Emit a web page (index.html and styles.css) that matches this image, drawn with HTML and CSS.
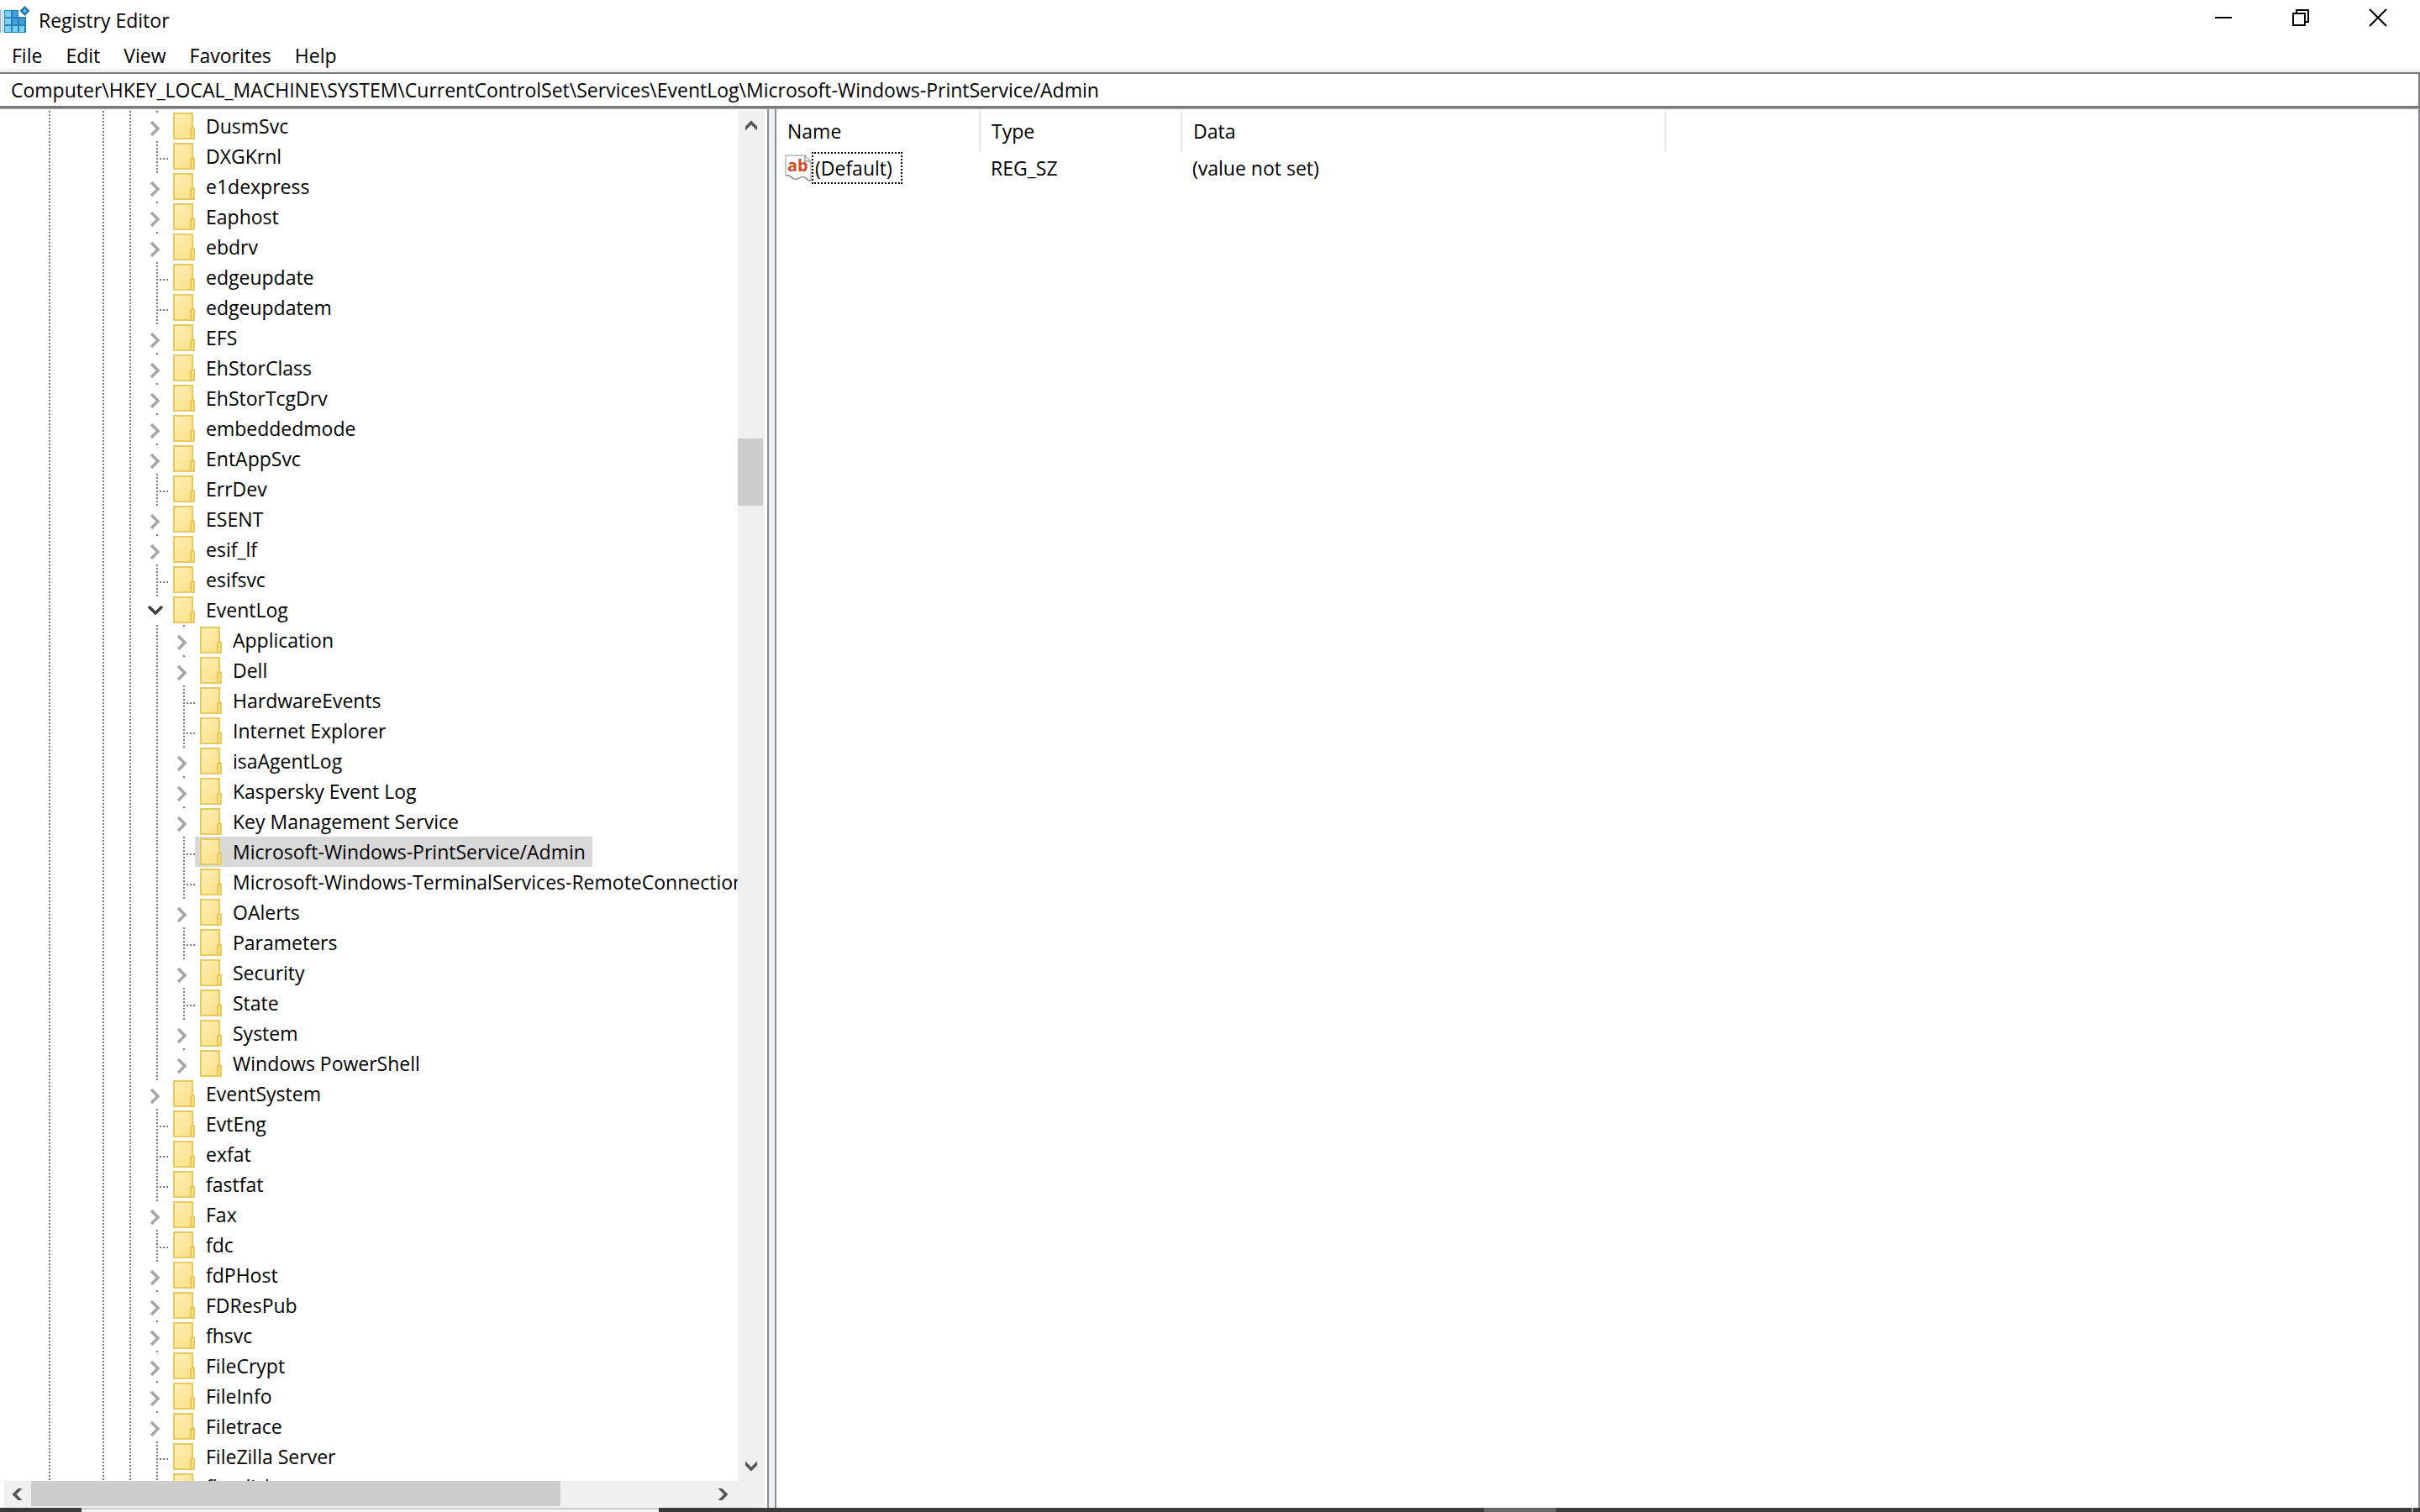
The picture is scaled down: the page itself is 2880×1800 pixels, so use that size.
FILE: index.html
```html
<!DOCTYPE html>
<html lang="en">
<head>
<meta charset="utf-8">
<title>Registry Editor</title>
<link rel="stylesheet" href="styles.css">
</head>
<body>
<svg class="defs" aria-hidden="true">
  <defs>
    <linearGradient id="paper" x1="0" y1="0" x2="1" y2="1">
      <stop offset="0" stop-color="#fdeeb4"/><stop offset="1" stop-color="#f9df85"/>
    </linearGradient>
    <symbol id="folder" viewBox="0 0 26 32">
      <path d="M1 1h22v17.500h2v12.500h-24z" fill="url(#paper)" stroke="#e8c95c" stroke-width="2"/>
      <path d="M21 30v-10q0-1.500 2-1.500" fill="none" stroke="#e0be4c" stroke-width="1.500"/>
    </symbol>
    <symbol id="right" viewBox="0 0 14 20"><path d="M2 2l8 8-8 8" fill="none" stroke="#a6a6a6" stroke-width="3.500"/></symbol>
    <symbol id="down" viewBox="0 0 20 14"><path d="M2 2l8 8 8-8" fill="none" stroke="#404040" stroke-width="3.500"/></symbol>
    <symbol id="arrow" viewBox="0 0 16 16"><path d="M1 8.500L8 1.500l7 7v5l-7-7-7 7z" fill="#555"/></symbol>
  </defs>
</svg>
<div class="window">
  <header class="titlebar">
    <svg class="app-icon" viewBox="0 0 36 34" aria-hidden="true">
      <path d="M.5 5v27M3 5v27" stroke="#7fb9df" stroke-width="1"/>
      <path d="M5 5h17v8h9v19H5z" fill="#2b7fb8"/>
      <path d="M6 6h7v7H6zM6 15h7v7H6zM6 24h7v7H6zM15 24h6v7h-6zM23 24h6v7h-6z" fill="#74d0fa"/>
      <path d="M15 6h6v7h-6zM15 15h6v7h-6zM23 15h6v7h-6z" fill="#3f9fd6"/>
      <path d="M29.500 0L35.500 6l-6 6-6-6z" fill="#2377ad"/>
      <path d="M29.500 3.500L32 6l-2.500 2.500L27 6z" fill="#5fc0f0"/>
    </svg>
    <h1 class="title">Registry Editor</h1>
    <div class="controls">
      <button class="control" aria-label="Minimize"><svg width="22" height="22" viewBox="0 0 22 22"><path d="M1 11h20" stroke="#000" stroke-width="2"/></svg></button>
      <button class="control" aria-label="Restore"><svg width="22" height="22" viewBox="0 0 22 22"><path d="M2 6h14v14H2zM6 6V2h14v14h-4" fill="none" stroke="#000" stroke-width="2"/></svg></button>
      <button class="control" aria-label="Close"><svg width="22" height="22" viewBox="0 0 22 22"><path d="M1 1l20 20M21 1L1 21" stroke="#000" stroke-width="2"/></svg></button>
    </div>
  </header>
  <nav class="menubar" aria-label="Menu">
    <button class="menu">File</button>
    <button class="menu">Edit</button>
    <button class="menu">View</button>
    <button class="menu">Favorites</button>
    <button class="menu">Help</button>
  </nav>
  <input class="address" type="text" aria-label="Address" value="Computer\HKEY_LOCAL_MACHINE\SYSTEM\CurrentControlSet\Services\EventLog\Microsoft-Windows-PrintService/Admin">
  <main class="panes">
    <section class="tree-pane" aria-label="Keys">
      <div class="tree-row">
        <ul class="tree">
          <li class="node"><button class="toggle" aria-label="Expand"><svg><use href="#right"/></svg></button><svg class="folder"><use href="#folder"/></svg><span class="key">DusmSvc</span></li>
          <li class="node leaf"><svg class="folder"><use href="#folder"/></svg><span class="key">DXGKrnl</span></li>
          <li class="node"><button class="toggle" aria-label="Expand"><svg><use href="#right"/></svg></button><svg class="folder"><use href="#folder"/></svg><span class="key">e1dexpress</span></li>
          <li class="node"><button class="toggle" aria-label="Expand"><svg><use href="#right"/></svg></button><svg class="folder"><use href="#folder"/></svg><span class="key">Eaphost</span></li>
          <li class="node"><button class="toggle" aria-label="Expand"><svg><use href="#right"/></svg></button><svg class="folder"><use href="#folder"/></svg><span class="key">ebdrv</span></li>
          <li class="node leaf"><svg class="folder"><use href="#folder"/></svg><span class="key">edgeupdate</span></li>
          <li class="node leaf"><svg class="folder"><use href="#folder"/></svg><span class="key">edgeupdatem</span></li>
          <li class="node"><button class="toggle" aria-label="Expand"><svg><use href="#right"/></svg></button><svg class="folder"><use href="#folder"/></svg><span class="key">EFS</span></li>
          <li class="node"><button class="toggle" aria-label="Expand"><svg><use href="#right"/></svg></button><svg class="folder"><use href="#folder"/></svg><span class="key">EhStorClass</span></li>
          <li class="node"><button class="toggle" aria-label="Expand"><svg><use href="#right"/></svg></button><svg class="folder"><use href="#folder"/></svg><span class="key">EhStorTcgDrv</span></li>
          <li class="node"><button class="toggle" aria-label="Expand"><svg><use href="#right"/></svg></button><svg class="folder"><use href="#folder"/></svg><span class="key">embeddedmode</span></li>
          <li class="node"><button class="toggle" aria-label="Expand"><svg><use href="#right"/></svg></button><svg class="folder"><use href="#folder"/></svg><span class="key">EntAppSvc</span></li>
          <li class="node leaf"><svg class="folder"><use href="#folder"/></svg><span class="key">ErrDev</span></li>
          <li class="node"><button class="toggle" aria-label="Expand"><svg><use href="#right"/></svg></button><svg class="folder"><use href="#folder"/></svg><span class="key">ESENT</span></li>
          <li class="node"><button class="toggle" aria-label="Expand"><svg><use href="#right"/></svg></button><svg class="folder"><use href="#folder"/></svg><span class="key">esif_lf</span></li>
          <li class="node leaf"><svg class="folder"><use href="#folder"/></svg><span class="key">esifsvc</span></li>
          <li class="node open"><button class="toggle" aria-label="Collapse"><svg><use href="#down"/></svg></button><svg class="folder"><use href="#folder"/></svg><span class="key">EventLog</span></li>
          <li class="branch">
            <ul class="children">
              <li class="node"><button class="toggle" aria-label="Expand"><svg><use href="#right"/></svg></button><svg class="folder"><use href="#folder"/></svg><span class="key">Application</span></li>
              <li class="node"><button class="toggle" aria-label="Expand"><svg><use href="#right"/></svg></button><svg class="folder"><use href="#folder"/></svg><span class="key">Dell</span></li>
              <li class="node leaf"><svg class="folder"><use href="#folder"/></svg><span class="key">HardwareEvents</span></li>
              <li class="node leaf"><svg class="folder"><use href="#folder"/></svg><span class="key">Internet Explorer</span></li>
              <li class="node"><button class="toggle" aria-label="Expand"><svg><use href="#right"/></svg></button><svg class="folder"><use href="#folder"/></svg><span class="key">isaAgentLog</span></li>
              <li class="node"><button class="toggle" aria-label="Expand"><svg><use href="#right"/></svg></button><svg class="folder"><use href="#folder"/></svg><span class="key">Kaspersky Event Log</span></li>
              <li class="node"><button class="toggle" aria-label="Expand"><svg><use href="#right"/></svg></button><svg class="folder"><use href="#folder"/></svg><span class="key">Key Management Service</span></li>
              <li class="node leaf"><span class="selected"><svg class="folder"><use href="#folder"/></svg><span class="key">Microsoft-Windows-PrintService/Admin</span></span></li>
              <li class="node leaf"><svg class="folder"><use href="#folder"/></svg><span class="key">Microsoft-Windows-TerminalServices-RemoteConnectionManager</span></li>
              <li class="node"><button class="toggle" aria-label="Expand"><svg><use href="#right"/></svg></button><svg class="folder"><use href="#folder"/></svg><span class="key">OAlerts</span></li>
              <li class="node leaf"><svg class="folder"><use href="#folder"/></svg><span class="key">Parameters</span></li>
              <li class="node"><button class="toggle" aria-label="Expand"><svg><use href="#right"/></svg></button><svg class="folder"><use href="#folder"/></svg><span class="key">Security</span></li>
              <li class="node leaf"><svg class="folder"><use href="#folder"/></svg><span class="key">State</span></li>
              <li class="node"><button class="toggle" aria-label="Expand"><svg><use href="#right"/></svg></button><svg class="folder"><use href="#folder"/></svg><span class="key">System</span></li>
              <li class="node"><button class="toggle" aria-label="Expand"><svg><use href="#right"/></svg></button><svg class="folder"><use href="#folder"/></svg><span class="key">Windows PowerShell</span></li>
            </ul>
          </li>
          <li class="node"><button class="toggle" aria-label="Expand"><svg><use href="#right"/></svg></button><svg class="folder"><use href="#folder"/></svg><span class="key">EventSystem</span></li>
          <li class="node leaf"><svg class="folder"><use href="#folder"/></svg><span class="key">EvtEng</span></li>
          <li class="node leaf"><svg class="folder"><use href="#folder"/></svg><span class="key">exfat</span></li>
          <li class="node leaf"><svg class="folder"><use href="#folder"/></svg><span class="key">fastfat</span></li>
          <li class="node"><button class="toggle" aria-label="Expand"><svg><use href="#right"/></svg></button><svg class="folder"><use href="#folder"/></svg><span class="key">Fax</span></li>
          <li class="node leaf"><svg class="folder"><use href="#folder"/></svg><span class="key">fdc</span></li>
          <li class="node"><button class="toggle" aria-label="Expand"><svg><use href="#right"/></svg></button><svg class="folder"><use href="#folder"/></svg><span class="key">fdPHost</span></li>
          <li class="node"><button class="toggle" aria-label="Expand"><svg><use href="#right"/></svg></button><svg class="folder"><use href="#folder"/></svg><span class="key">FDResPub</span></li>
          <li class="node"><button class="toggle" aria-label="Expand"><svg><use href="#right"/></svg></button><svg class="folder"><use href="#folder"/></svg><span class="key">fhsvc</span></li>
          <li class="node"><button class="toggle" aria-label="Expand"><svg><use href="#right"/></svg></button><svg class="folder"><use href="#folder"/></svg><span class="key">FileCrypt</span></li>
          <li class="node"><button class="toggle" aria-label="Expand"><svg><use href="#right"/></svg></button><svg class="folder"><use href="#folder"/></svg><span class="key">FileInfo</span></li>
          <li class="node"><button class="toggle" aria-label="Expand"><svg><use href="#right"/></svg></button><svg class="folder"><use href="#folder"/></svg><span class="key">Filetrace</span></li>
          <li class="node leaf"><svg class="folder"><use href="#folder"/></svg><span class="key">FileZilla Server</span></li>
          <li class="node leaf"><svg class="folder"><use href="#folder"/></svg><span class="key">flpydisk</span></li>
        </ul>
        <div class="vscroll">
          <button class="scroll-button" aria-label="Scroll up"><svg class="arrow"><use href="#arrow"/></svg></button>
          <div class="vtrack"><div class="vthumb"></div></div>
          <button class="scroll-button" aria-label="Scroll down"><svg class="arrow to-down"><use href="#arrow"/></svg></button>
        </div>
      </div>
      <div class="hscroll">
        <button class="scroll-button" aria-label="Scroll left"><svg class="arrow to-left"><use href="#arrow"/></svg></button>
        <div class="htrack"><div class="hthumb"></div></div>
        <button class="scroll-button" aria-label="Scroll right"><svg class="arrow to-right"><use href="#arrow"/></svg></button>
      </div>
    </section>
    <div class="splitter"></div>
    <section class="value-pane" aria-label="Values">
      <table class="values">
        <colgroup><col class="col-name"><col class="col-type"><col class="col-data"></colgroup>
        <thead><tr><th>Name</th><th>Type</th><th>Data</th></tr></thead>
        <tbody>
          <tr>
            <td class="name-cell">
              <div class="value-name">
                <svg class="string-icon" viewBox="0 0 32 36" aria-hidden="true">
                  <path d="M1 27V3h23l7 7v23q-4 0-6-3-4-3-8 0-4 3-8 0-3-4-8-3" fill="#fff" stroke="#b8b8b8" stroke-width="1.500"/>
                  <path d="M24 3v7h7M1 27q5-1 8 3 4 3 8 0 4-3 8 0 2 3 6 3" fill="none" stroke="#999" stroke-width="1.500"/>
                  <text class="ab" x="3" y="22">ab</text>
                </svg>
                <span class="focused">(Default)</span>
              </div>
            </td>
            <td>REG_SZ</td>
            <td>(value not set)</td>
          </tr>
        </tbody>
      </table>
    </section>
  </main>
  <footer class="taskbar"><div class="task-start"></div><div class="task-search"></div><div class="task-apps"></div><div class="task-active"></div><div class="task-tray"></div><div class="task-desktop"></div></footer>
</div>
</body>
</html>
```
FILE: styles.css
```css
* { box-sizing: border-box; }
body {
  margin: 0;
  background: #fff;
  color: #000;
  font: 23px/36px "Open Sans", "Noto Sans", sans-serif;
}
button, input { font: inherit; color: inherit; border: 0; padding: 0; margin: 0; background: none; }
svg { display: block; flex: none; }
.defs { position: absolute; width: 0; height: 0; }
.window { display: flex; flex-direction: column; height: 100vh; overflow: hidden; }

.titlebar { display: flex; flex: none; align-items: center; height: 48px; }
.app-icon { width: 36px; height: 34px; }
.title { flex: 1; margin: 0; padding-left: 10px; font-size: inherit; font-weight: 400; }
.controls { display: flex; align-self: flex-start; margin-right: 4px; }
.control { display: flex; align-items: center; justify-content: center; width: 92px; height: 42px; }

.menubar { display: flex; flex: none; gap: 28px; height: 38px; padding-left: 14px; border-bottom: 4px solid #f2f2f2; }
.menu { line-height: 36px; }

.address { flex: none; width: 100%; height: 43px; padding-left: 13px; border: 2px solid #7a7a7a; border-left: 0; border-bottom-width: 3px; }

.panes { display: flex; flex: 1; min-height: 0; border-right: 2px solid #828790; border-top: 1px solid #a5abb2; }
.tree-pane { display: flex; flex-direction: column; flex: 0 0 913px; min-width: 0; padding-top: 2px; }
.tree-row { display: flex; flex: 1; min-height: 0; }
.tree, .children { margin: 0; padding: 0; list-style: none; }
.tree {
  --dots: repeating-linear-gradient(#777 0 2px, transparent 2px 4px);
  flex: 1;
  min-width: 0;
  overflow: hidden;
  background: var(--dots) 58px 0 / 2px 100% no-repeat, var(--dots) 122px 0 / 2px 100% no-repeat, var(--dots) 154px 0 / 2px 100% no-repeat;
}
.branch { background: var(--dots) 186px 0 / 2px 100% no-repeat; }
.children { padding-left: 32px; }
.node {
  display: flex;
  align-items: center;
  height: 36px;
  padding-left: 172px;
  white-space: nowrap;
  background: linear-gradient(#777, #777) 186px 0 / 2px 2px no-repeat;
}
.leaf {
  padding-left: 198px;
  background: var(--dots) 186px 0 / 2px 100% no-repeat, repeating-linear-gradient(90deg, #777 0 2px, transparent 2px 4px) 190px 20px / 12px 2px no-repeat;
}
.toggle { display: flex; align-items: center; justify-content: center; width: 26px; height: 36px; padding-top: 6px; }
.toggle svg { width: 14px; height: 20px; }
.open .toggle { padding-top: 2px; }
.open .toggle svg { width: 20px; height: 14px; }
.folder { width: 26px; height: 32px; margin-left: 8px; }
.key { padding-left: 13px; }
.selected { display: flex; align-items: center; padding-right: 8px; background: linear-gradient(#d9d9d9, #d9d9d9) 2px 0 no-repeat; }

.vscroll { display: flex; flex-direction: column; flex: none; width: 32px; margin-right: 3px; background: #f0f0f0; }
.scroll-button { display: flex; flex: none; align-items: center; justify-content: center; width: 32px; height: 36px; }
.arrow { width: 16px; height: 16px; }
.to-down { transform: rotate(180deg); }
.to-left { transform: rotate(-90deg); }
.to-right { transform: rotate(90deg); }
.vtrack { flex: 1; padding-top: 354px; }
.vthumb { width: 30px; height: 80px; background: #cdcdcd; }
.hscroll { display: flex; flex: none; height: 32px; margin: 0 3px 0 5px; padding-right: 34px; background: #f0f0f0; }
.hscroll .scroll-button { height: 32px; }
.htrack { flex: 1; }
.hthumb { width: 630px; height: 30px; background: #cdcdcd; }

.splitter { flex: none; width: 11px; border: solid #8a8f98; border-width: 0 2px; background: #f0f0f0; }
.value-pane { flex: 1; min-width: 0; padding-top: 2px; }
.values { table-layout: fixed; width: 1058px; border-collapse: collapse; }
.col-name { width: 242px; }
.col-type { width: 240px; }
.col-data { width: 576px; }
.values th, .values td { padding: 0 0 0 13px; text-align: left; font-weight: 400; }
.values th { height: 48px; border-right: 2px solid #e5e5e5; }
.values td { height: 40px; }
.values .name-cell { padding-left: 10px; }
.value-name { display: flex; align-items: center; }
.string-icon { width: 32px; height: 36px; }
.ab { font: 700 20px "Open Sans", sans-serif; fill: #cf4b26; }
.focused { padding: 0 10px 0 2px; border: 2px dotted #000; line-height: 34px; }

.taskbar { display: flex; flex: none; height: 5px; background: #3c3c3c; }
.task-start { width: 97px; }
.task-search { width: 687px; background: #f3f3f3; border-top: 2px solid #ccc; }
.task-apps { width: 982px; }
.task-active { width: 86px; background: #696969; }
.task-tray { flex: 1; }
.task-desktop { width: 10px; border-left: 2px solid #999; }
```
